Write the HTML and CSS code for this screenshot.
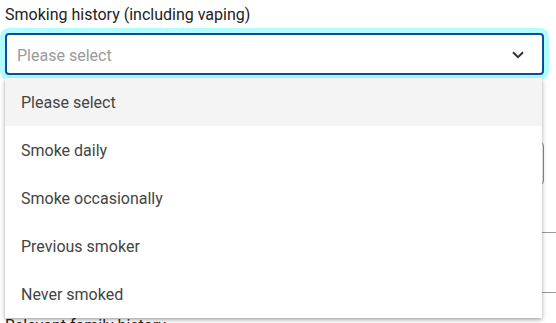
FILE: index.html
```html
<!DOCTYPE html>
<html lang="en">
<head>
<meta charset="utf-8">
<title>Smoking history</title>
<link rel="stylesheet" href="styles.css">
</head>
<body>
<div class="form">
  <div class="field">
    <label class="label">Smoking history (including vaping)</label>
    <div class="select focused">
      <span class="placeholder">Please select</span>
      <svg class="chevron" width="12" height="8" viewBox="0 0 12 8"><path d="M1 1.2 L6 6.2 L11 1.2" fill="none" stroke="#333" stroke-width="2"/></svg>
    </div>
  </div>
  <div class="box2"></div>
  <div class="rule rule1"></div>
  <div class="rule rule2"></div>
  <div class="label label2">Relevant family history</div>

  <ul class="menu">
    <li class="item active">Please select</li>
    <li class="item">Smoke daily</li>
    <li class="item">Smoke occasionally</li>
    <li class="item">Previous smoker</li>
    <li class="item">Never smoked</li>
  </ul>
</div>
</body>
</html>
```
FILE: styles.css
```css
html, body {
  margin: 0;
  padding: 0;
  background: #fff;
  overflow: hidden;
}
body {
  font-family: Roboto, "Liberation Sans", Arial, sans-serif;
  color: #212121;
}
.form {
  position: relative;
  padding: 5px 0 0 5px;
  width: 539px;
}
.label {
  display: block;
  font-size: 16px;
  line-height: 20px;
  height: 20px;
  color: #222;
}
.select {
  margin-top: 8px;
  height: 42px;
  box-sizing: border-box;
  border: 2px solid #0b4f9c;
  border-radius: 4px;
  box-shadow: 0 0 0 5px #b1fdfd;
  display: flex;
  align-items: center;
  justify-content: space-between;
  padding: 0 18px 0 10px;
  background: #fff;
}
.placeholder {
  font-size: 16px;
  color: #9a9a9a;
  line-height: 20px;
  padding-top: 3px;
}
.chevron {
  display: block;
  margin-top: 1px;
}
.box2 {
  margin-top: 67px;
  height: 43px;
  box-sizing: border-box;
  border: 1px solid #8f8f8f;
  border-radius: 4px;
}
.rule {
  border-top: 1px solid #9a9a9a;
  width: 551px;
}
.rule1 { margin-top: 47px; }
.rule2 { margin-top: 59px; }
.label2 { margin-top: 23px; }
.menu {
  position: absolute;
  top: 78px;
  left: 5px;
  width: 537px;
  margin: 0;
  padding: 0;
  list-style: none;
  background: #fff;
  box-shadow: 0 2px 5px rgba(0,0,0,0.28), 0 1px 2px rgba(0,0,0,0.12);
}
.item {
  height: 48px;
  line-height: 50px;
  padding-left: 16px;
  font-size: 16px;
  color: #444;
}
.item.active {
  background: #f4f4f4;
}
```
